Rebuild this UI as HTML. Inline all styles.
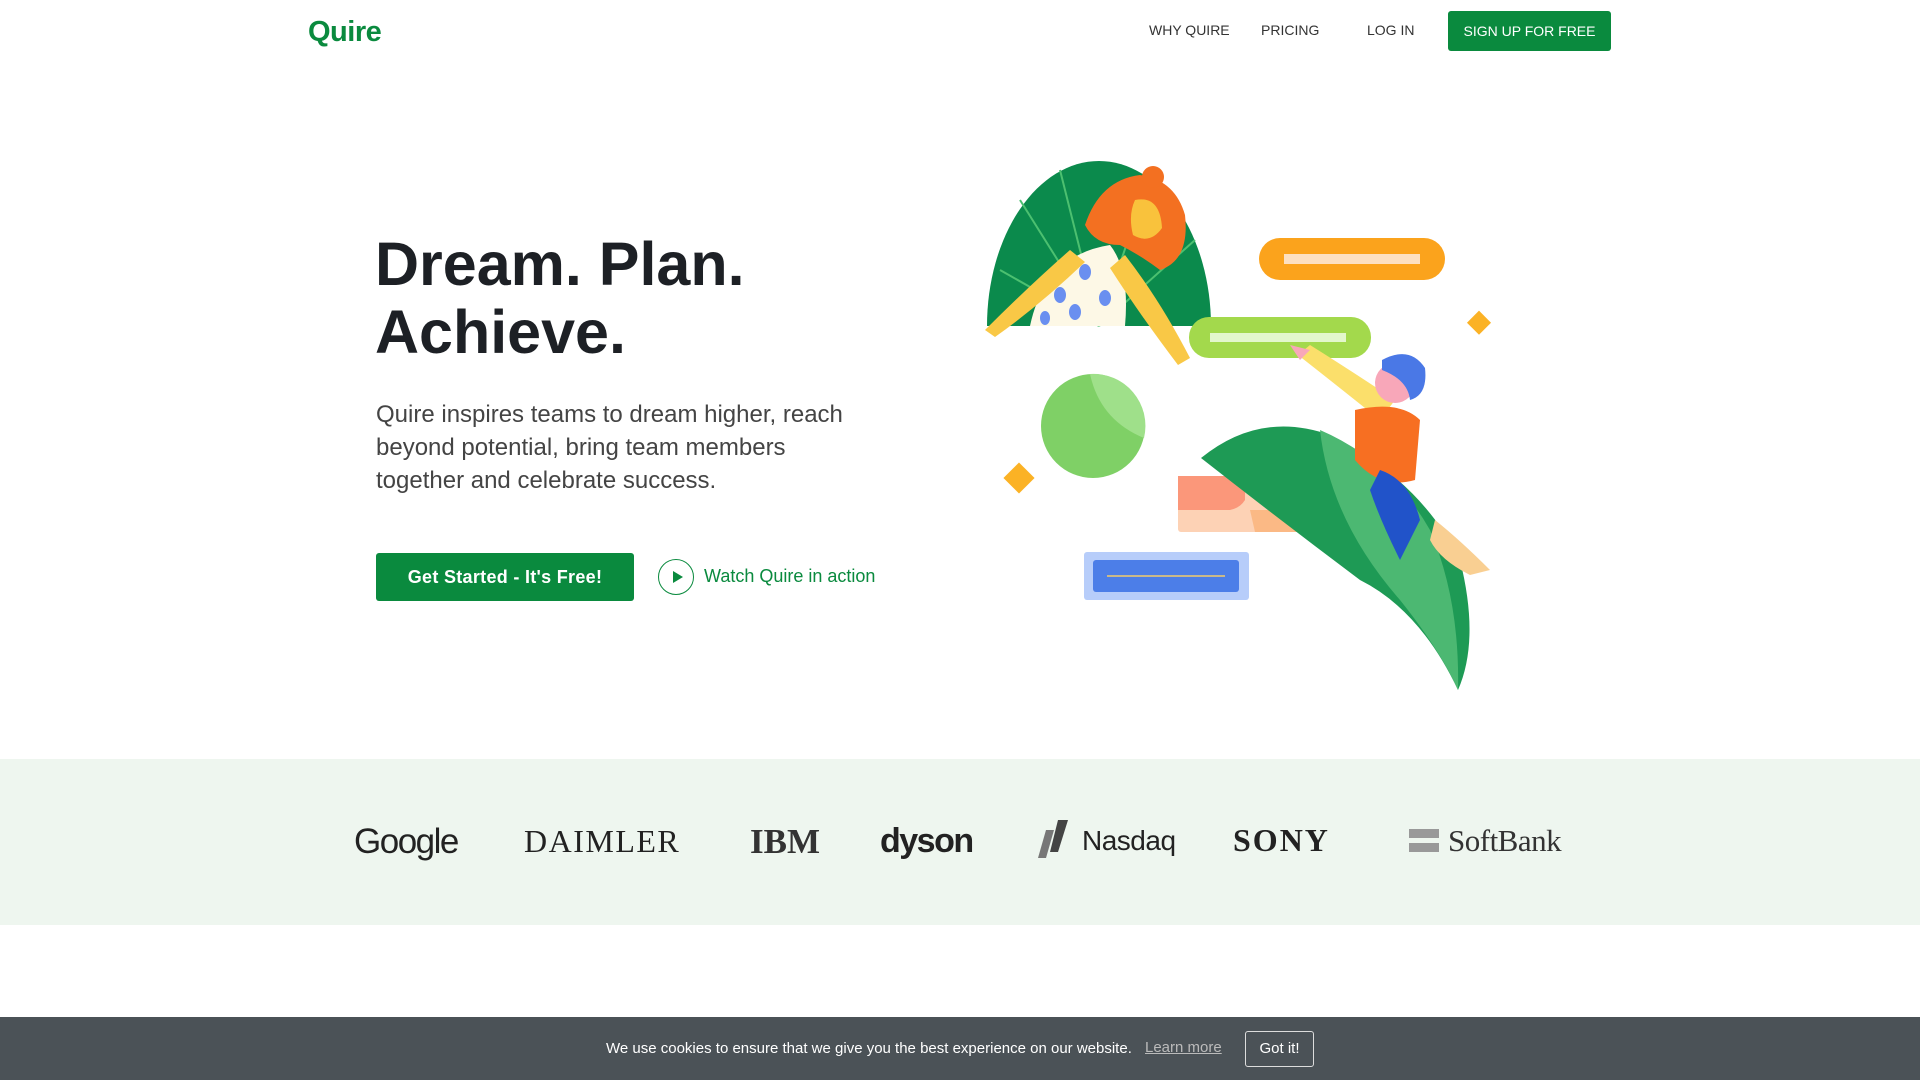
<!DOCTYPE html>
<html><head><meta charset="utf-8"><style>
*{margin:0;padding:0;box-sizing:border-box}
body{width:1920px;height:1080px;overflow:hidden;background:#fff;font-family:"Liberation Sans",Arial,sans-serif;position:relative;color:#222}
.a{position:absolute}
.nav{font-size:14px;color:#333;top:22px}
</style></head><body>
<div class="a" style="left:308px;top:16px;font-size:29px;font-weight:bold;color:#0a8a3e;letter-spacing:-0.5px">Quire</div>
<div class="a nav" style="left:1149px">WHY QUIRE</div>
<div class="a nav" style="left:1261px">PRICING</div>
<div class="a nav" style="left:1367px">LOG IN</div>
<div class="a" style="left:1448px;top:11px;width:163px;height:40px;background:#0a8a3e;border-radius:3px;color:#fff;font-size:14px;line-height:40px;text-align:center">SIGN UP FOR FREE</div>

<div class="a" style="left:375px;top:230px;font-size:61px;font-weight:bold;line-height:68px;color:#1d2025">Dream. Plan.<br>Achieve.</div>
<div class="a" style="left:376px;top:398px;font-size:24px;line-height:33px;color:#444;width:480px">Quire inspires teams to dream higher, reach beyond potential, bring team members together and celebrate success.</div>
<div class="a" style="left:376px;top:553px;width:258px;height:48px;background:#0a8a3e;border-radius:3px;color:#fff;font-size:18px;font-weight:bold;line-height:48px;text-align:center;letter-spacing:0.3px">Get Started - It's Free!</div>
<div class="a" style="left:658px;top:559px;width:36px;height:36px;border:1.5px solid #0a8a3e;border-radius:50%"></div>
<svg class="a" style="left:671px;top:570px" width="14" height="14"><path d="M2 1 L12 7 L2 13Z" fill="#0a8a3e"/></svg>
<div class="a" style="left:704px;top:566px;font-size:18px;color:#0a8a3e">Watch Quire in action</div>

<svg class="a" style="left:960px;top:140px" width="560" height="560" viewBox="960 140 560 560">
<path d="M987 326 A112 165 0 0 1 1211 326Z" fill="#0b8a4c"/>
<g stroke="#4cc070" stroke-width="2"><line x1="1099" y1="326" x2="1020" y2="200"/><line x1="1099" y1="326" x2="1060" y2="170"/><line x1="1099" y1="326" x2="1150" y2="175"/><line x1="1099" y1="326" x2="1195" y2="240"/><line x1="1099" y1="326" x2="1000" y2="270"/></g>
<path d="M1030 326 Q1045 255 1110 245 Q1130 270 1125 326Z" fill="#fdf8e6"/>
<g fill="#6a8ff0"><ellipse cx="1060" cy="295" rx="6" ry="8"/><ellipse cx="1085" cy="272" rx="6" ry="8"/><ellipse cx="1075" cy="312" rx="6" ry="8"/><ellipse cx="1105" cy="298" rx="6" ry="8"/><ellipse cx="1045" cy="318" rx="5" ry="7"/></g>
<path d="M1085 225 Q1100 180 1140 175 Q1175 180 1185 215 Q1190 260 1160 270 Q1140 255 1120 245 Q1095 245 1085 225Z" fill="#f37021"/>
<circle cx="1153" cy="177" r="11" fill="#f37021"/>
<path d="M1135 200 Q1160 195 1162 228 Q1150 245 1133 235 Q1128 215 1135 200Z" fill="#f9c23c"/>
<path d="M985 330 Q1030 285 1070 250 L1085 262 Q1040 305 995 337Z" fill="#f9c846"/>
<path d="M1125 255 Q1160 300 1190 358 L1178 365 Q1140 315 1110 268Z" fill="#f9c846"/>
<rect x="1259" y="238" width="186" height="42" rx="21" fill="#fba31c"/>
<rect x="1284" y="254" width="136" height="10" fill="#fde0c0"/>
<rect x="1189" y="317" width="182" height="41" rx="20" fill="#a3d94c"/>
<rect x="1210" y="333" width="136" height="9" fill="#e3f7cc"/>
<circle cx="1093" cy="426" r="52" fill="#7fd066"/>
<path d="M1090 374 A52 52 0 0 1 1144 438 Q1100 420 1090 374Z" fill="#9fe08a"/>
<rect x="1008" y="467" width="22" height="22" fill="#fbb225" transform="rotate(45 1019 478)"/>
<rect x="1471" y="314" width="17" height="17" fill="#fbb225" transform="rotate(45 1479 322)"/>
<rect x="1178" y="476" width="122" height="56" rx="3" fill="#fdd2b5"/>
<path d="M1178 476 H1245 V500 Q1240 508 1230 510 H1178Z" fill="#fb977a"/>
<path d="M1250 510 H1300 V532 H1255Z" fill="#fbb985"/>
<rect x="1084" y="552" width="165" height="48" rx="3" fill="#b7cdfa"/>
<rect x="1093" y="560" width="146" height="32" rx="3" fill="#4c7ee8"/>
<line x1="1107" y1="576" x2="1225" y2="576" stroke="#c9b98a" stroke-width="2"/>
<path d="M1201 458 Q1260 410 1330 435 Q1420 480 1460 560 Q1480 640 1458 690 Q1420 610 1360 580 Q1280 520 1201 458Z" fill="#1e9a55"/>
<path d="M1320 430 Q1330 520 1400 600 Q1440 650 1458 690 Q1460 600 1430 530 Q1390 460 1320 430Z" fill="#4cb872"/>
<path d="M1298 355 Q1330 380 1380 420 L1395 400 Q1350 370 1310 345Z" fill="#fbdf6b"/>
<path d="M1355 410 Q1400 400 1420 420 L1415 480 Q1380 490 1355 460Z" fill="#f76f22"/>
<path d="M1380 470 Q1410 480 1420 520 L1400 560 Q1380 520 1370 490Z" fill="#2153c9"/>
<path d="M1435 520 Q1460 540 1490 570 L1470 575 Q1440 560 1430 540Z" fill="#f9cf92"/>
<circle cx="1395" cy="383" r="20" fill="#f8a7b9"/>
<path d="M1382 360 Q1410 345 1425 368 Q1428 395 1410 400 Q1408 380 1382 370Z" fill="#4a78e6"/>
<path d="M1290 345 L1300 360 L1310 350 Z" fill="#f8a7b9"/>
</svg>

<div class="a" style="left:0;top:759px;width:1920px;height:166px;background:#eef6ef"></div>
<div class="a" style="left:354px;top:822px;font-size:35px;color:#222;letter-spacing:-1.5px">Google</div>
<div class="a" style="left:524px;top:823px;font-family:'Liberation Serif',serif;font-size:32px;color:#222;letter-spacing:1.5px">DAIMLER</div>
<div class="a" style="left:750px;top:822px;font-family:'Liberation Serif',serif;font-weight:bold;font-size:35px;color:#333">IBM</div>
<div class="a" style="left:880px;top:822px;font-size:34px;font-weight:bold;color:#222;letter-spacing:-1.5px">dyson</div>
<svg class="a" style="left:1036px;top:820px" width="36" height="38"><path d="M10 10 H18 L10 38 H2Z" fill="#777"/><path d="M22 0 H32 L22 32 H14Z" fill="#444"/></svg>
<div class="a" style="left:1082px;top:825px;font-size:28px;color:#222;letter-spacing:-0.5px">Nasdaq</div>
<div class="a" style="left:1233px;top:822px;font-family:'Liberation Serif',serif;font-weight:bold;font-size:32px;color:#222;letter-spacing:2px">SONY</div>
<div class="a" style="left:1409px;top:829px;width:30px;height:9px;background:#999"></div>
<div class="a" style="left:1409px;top:843px;width:30px;height:9px;background:#999"></div>
<div class="a" style="left:1448px;top:823px;font-family:'Liberation Serif',serif;font-size:31px;color:#333;letter-spacing:-0.5px">SoftBank</div>

<div class="a" style="left:0;top:1017px;width:1920px;height:63px;background:#4b5257"></div>
<div class="a" style="left:606px;top:1040px;font-size:15px;color:#fff">We use cookies to ensure that we give you the best experience on our website.</div>
<div class="a" style="left:1145px;top:1039px;font-size:15px;color:#bbb;text-decoration:underline">Learn more</div>
<div class="a" style="left:1245px;top:1031px;width:69px;height:36px;border:1px solid #ddd;border-radius:3px;color:#fff;font-size:15px;line-height:34px;text-align:center">Got it!</div>
</body></html>
